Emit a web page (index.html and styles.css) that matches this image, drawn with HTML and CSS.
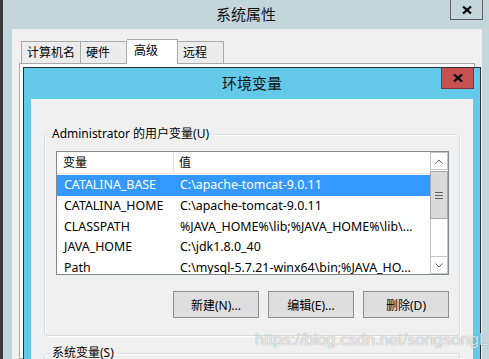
FILE: index.html
```html
<!DOCTYPE html>
<html lang="zh-CN">
<head>
<meta charset="UTF-8">
<title>系统属性 - 环境变量</title>
<link rel="stylesheet" href="styles.css">
</head>
<body>
<div class="screen">
  <div class="sys-window">
    <div class="titlebar">
      <span></span>
      <div class="title">系统属性</div>
      <div class="close-btn">
        <svg width="10" height="8" viewBox="0 0 10 8"><path d="M1 0.5 L9 7.5 M9 0.5 L1 7.5" stroke="#000" stroke-width="2.2"/></svg>
      </div>
    </div>
    <div class="sys-body">
      <div class="tabs">
        <div class="tab tab-first">计算机名</div>
        <div class="tab tab-hw">硬件</div>
        <div class="tab selected">高级</div>
        <div class="tab tab-remote">远程</div>
      </div>
      <div class="tab-panel"></div>
    </div>
  </div>

  <!-- environment variables dialog sits on top of the system properties window -->
  <div class="env-window">
    <div class="env-titlebar">
      <span></span>
      <div class="title">环境变量</div>
      <div class="close-btn red">
        <svg width="10" height="8" viewBox="0 0 10 8"><path d="M1 0.5 L9 7.5 M9 0.5 L1 7.5" stroke="#000" stroke-width="2.2"/></svg>
      </div>
    </div>
    <div class="env-body">
      <fieldset class="group">
        <legend>Administrator 的用户变量(U)</legend>
        <div class="group-inner">
          <div class="listbox">
            <div class="list-main">
              <div class="list-head">
                <div class="col-name">变量</div>
                <div class="col-value">值</div>
              </div>
              <div class="rows">
                <div class="row selected"><div class="col-name">CATALINA_BASE</div><div class="col-value">C:\apache-tomcat-9.0.11</div></div>
                <div class="row"><div class="col-name">CATALINA_HOME</div><div class="col-value">C:\apache-tomcat-9.0.11</div></div>
                <div class="row"><div class="col-name">CLASSPATH</div><div class="col-value">%JAVA_HOME%\lib;%JAVA_HOME%\lib\...</div></div>
                <div class="row"><div class="col-name">JAVA_HOME</div><div class="col-value">C:\jdk1.8.0_40</div></div>
                <div class="row"><div class="col-name">Path</div><div class="col-value">C:\mysql-5.7.21-winx64\bin;%JAVA_HO...</div></div>
              </div>
            </div>
            <div class="scrollbar">
              <div class="sb-arrow">
                <svg width="8" height="5" viewBox="0 0 8 5"><path d="M0.5 4.5 L4 1 L7.5 4.5" fill="none" stroke="#606060" stroke-width="1"/></svg>
              </div>
              <div class="sb-thumb">
                <svg width="8" height="7" viewBox="0 0 8 7"><path d="M0 0.5 H8 M0 3.5 H8 M0 6.5 H8" stroke="#606060" stroke-width="1"/></svg>
              </div>
              <div class="sb-track"></div>
              <div class="sb-arrow">
                <svg width="8" height="5" viewBox="0 0 8 5"><path d="M0.5 0.5 L4 4 L7.5 0.5" fill="none" stroke="#606060" stroke-width="1"/></svg>
              </div>
            </div>
          </div>
          <div class="buttons">
            <button>新建(N)...</button>
            <button>编辑(E)...</button>
            <button>删除(D)</button>
          </div>
        </div>
      </fieldset>
      <fieldset class="group second">
        <legend>系统变量(S)</legend>
        <div class="group-inner"></div>
      </fieldset>
    </div>
  </div>

  <div class="watermark">https://blog.csdn.net/songsongL</div>
</div>
</body>
</html>
```

FILE: styles.css
```css
body {
    margin: 0;
    padding: 0;
    font-family: "Noto Sans", "Noto Sans CJK SC", sans-serif;
    font-size: 12px;
    color: #000;
    background-color: #c3d6dc;
}

.screen {
    position: relative;
    height: 359px;
    overflow: hidden;
    background-color: #c3d6dc; /* inactive window frame */
    border-left: 3px solid #3a3a3a;
}

/* ---- outer window: 系统属性 ---- */
.sys-window {
    display: flex;
    flex-direction: column;
    height: 100%;
}

.titlebar {
    display: grid;
    grid-template-columns: 1fr auto 1fr;
    height: 29px;
    flex: none;
}

.title {
    font-size: 15px;
    line-height: 29px;
    color: #111;
}

.close-btn {
    justify-self: end;
    box-sizing: border-box;
    width: 33px;
    height: 20px;
    margin-right: 6px;
    border: 1px solid #5c5c5c;
    border-top: none;
    display: flex;
    align-items: center;
    justify-content: center;
}

.close-btn.red {
    width: 33px;
    height: 21px;
    background-color: #c75050;
    border-color: #7d3434;
}

.sys-body {
    flex: 1;
    margin: 0 7px 0 9px;
    padding: 10px 7px 0 7px;
    background-color: #f0f0f0;
    display: flex;
    flex-direction: column;
}

.tabs {
    display: flex;
    align-items: flex-end;
    height: 25px;
    padding-left: 2px;
    margin-bottom: -1px;
    position: relative;
    z-index: 1;
}

.tab {
    box-sizing: border-box;
    height: 22px;
    margin-bottom: 1px;
    padding: 0 5px;
    line-height: 21px;
    white-space: nowrap;
    border: 1px solid #a9a9a9;
    border-bottom: none;
    border-left: none;
    background-color: #ececec;
}

.tab-first {
    border-left: 1px solid #a9a9a9;
    width: 60px;
}

.tab-hw {
    width: 46px;
}

.tab-remote {
    width: 46px;
}

.tab.selected {
    height: 25px;
    margin-bottom: 0;
    width: 51px;
    padding-left: 7px;
    line-height: 22px;
    background-color: #fff;
}

.tab-panel {
    flex: 1;
    background-color: #fff;
    border: 1px solid #a9a9a9;
}

/* ---- inner window: 环境变量 ---- */
.env-window {
    position: absolute;
    left: 20px;
    top: 67px;
    width: 458px;
    height: 320px;
    box-sizing: border-box;
    border: 1px solid #2e2e2e;
    background-color: #65c9ea;
    display: flex;
    flex-direction: column;
}

.env-titlebar {
    display: grid;
    grid-template-columns: 1fr auto 1fr;
    height: 31px;
    flex: none;
}

.env-titlebar .title {
    line-height: 31px;
}

.env-titlebar .close-btn {
    margin-right: 6px;
}

.env-body {
    flex: 1;
    margin: 0 7px;
    padding: 27px 13px 0 13px;
    background-color: #f0f0f0;
}

.group {
    margin: 0;
    padding: 0;
    border: 1px solid #d5dfe5;
    border-radius: 3px;
    box-shadow: inset 1px 1px 0 #fff, 1px 1px 0 #fff;
}

.group legend {
    margin-left: 5px;
    padding: 0 2px;
    line-height: 16px;
}

.group-inner {
    padding: 9px 10px 17px 11px;
}

.group.second {
    margin-top: 9px;
}

.listbox {
    display: flex;
    height: 124px;
    box-sizing: border-box;
    border: 1px solid #828790;
    background-color: #fff;
}

.list-main {
    flex: 1;
    overflow: hidden;
}

.list-head {
    display: grid;
    grid-template-columns: 117px 1fr;
    height: 21px;
    line-height: 21px;
    border-bottom: 1px solid #e5e5e5;
}

.list-head .col-name {
    padding-left: 6px;
    border-right: 1px solid #e5e5e5;
}

.list-head .col-value {
    padding-left: 5px;
}

.rows {
    margin-top: 1px;
    font-size: 12.4px;
}

.row {
    display: grid;
    grid-template-columns: 117px 1fr;
    height: 20.75px;
    line-height: 20.75px;
    white-space: nowrap;
}

.row .col-name {
    padding-left: 7px;
}

.row .col-value {
    padding-left: 6px;
    overflow: hidden;
}

.row.selected {
    background-color: #3399ff;
    color: #fff;
}

.scrollbar {
    width: 18px;
    display: flex;
    flex-direction: column;
    background-color: #fff;
}

.sb-arrow {
    box-sizing: border-box;
    height: 18px;
    border: 1px solid #c4c4c4;
    display: flex;
    align-items: center;
    justify-content: center;
}

.sb-thumb {
    box-sizing: border-box;
    height: 48px;
    margin-top: 1px;
    background-color: #dadada;
    border: 1px solid #a8a8a8;
    display: flex;
    align-items: center;
    justify-content: center;
}

.sb-track {
    flex: 1;
    border-left: 1px solid #c4c4c4;
    border-right: 1px solid #c4c4c4;
}

.buttons {
    display: flex;
    justify-content: flex-end;
    gap: 9px;
    margin-top: 16px;
}

button {
    width: 86px;
    height: 27px;
    padding: 0;
    font-family: "Noto Sans", "Noto Sans CJK SC", sans-serif;
    font-size: 12px;
    color: #000;
    background-color: #dedede;
    border: 1px solid #8e8e8e;
    border-radius: 0;
}

.watermark {
    position: absolute;
    left: 252px;
    top: 330px;
    font-family: "Liberation Sans", sans-serif;
    font-size: 16.5px;
    color: rgba(255, 255, 255, 0.8);
    text-shadow: 0 0 1px rgba(0, 0, 0, 0.45);
    white-space: nowrap;
}
```
